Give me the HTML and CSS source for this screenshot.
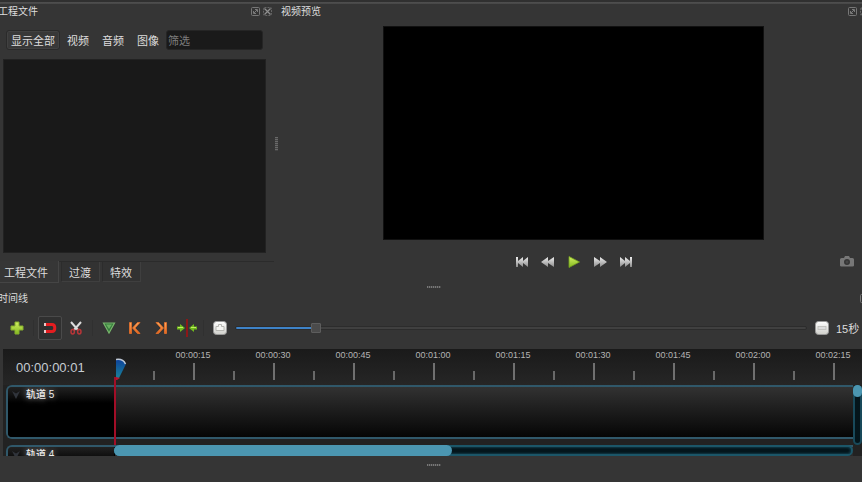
FILE: index.html
```html
<!DOCTYPE html>
<html lang="zh-CN">
<head>
<meta charset="utf-8">
<title>视频编辑</title>
<link rel="stylesheet" href="styles.css">
</head>
<body>
<svg class="defs" aria-hidden="true">
  <defs>
    <linearGradient id="silver" x1="0" y1="0" x2="0" y2="1"><stop offset="0" stop-color="#eee"/><stop offset="1" stop-color="#8d8d8d"/></linearGradient>
    <linearGradient id="green" x1="0" y1="0" x2="0" y2="1"><stop offset="0" stop-color="#d2ef62"/><stop offset="1" stop-color="#83b81f"/></linearGradient>
    <linearGradient id="orange" x1="0" y1="0" x2="0" y2="1"><stop offset="0" stop-color="#ffac60"/><stop offset="1" stop-color="#e2631c"/></linearGradient>
    <linearGradient id="blue" x1="0" y1="0" x2="0" y2="1"><stop offset="0" stop-color="#0d419b"/><stop offset="1" stop-color="#1b8a9a"/></linearGradient>
    <linearGradient id="white" x1="0" y1="0" x2="0" y2="1"><stop offset="0" stop-color="#fff"/><stop offset="1" stop-color="#cfcfca"/></linearGradient>
    <symbol id="float" viewBox="0 0 9 9"><rect x=".5" y=".5" width="8" height="8" rx="1" fill="none" stroke="#777"/><path d="M2.500 4v2.500H5M4 2.500h2.500V5M3 6l3-3" fill="none" stroke="#7a7a7a"/></symbol>
    <symbol id="close" viewBox="0 0 9 9"><rect x=".5" y=".5" width="8" height="8" rx="1" fill="none" stroke="#666" stroke-dasharray="2 1"/><path d="M1.500 1.500l6 6M7.500 1.500l-6 6" stroke="#909090" stroke-width="1.200"/></symbol>
  </defs>
</svg>
<div class="topline"></div>
<main class="upper">
  <section class="dock files">
    <header class="dock-title"><h2>工程文件</h2><span class="dock-buttons">
      <button aria-label="浮动"><svg width="9" height="9"><use href="#float"/></svg></button>
      <button aria-label="关闭"><svg width="9" height="9"><use href="#close"/></svg></button></span></header>
    <div class="filters">
      <button class="filter on">显示全部</button><button class="filter">视频</button><button class="filter">音频</button><button class="filter">图像</button>
      <input type="text" class="search" placeholder="筛选" aria-label="筛选">
    </div>
    <div class="file-list"></div>
    <nav class="tabs"><button class="tab active">工程文件</button><button class="tab">过渡</button><button class="tab">特效</button></nav>
  </section>
  <div class="grip-v"><i></i></div>
  <section class="dock preview">
    <header class="dock-title"><h2>视频预览</h2><span class="dock-buttons">
      <button aria-label="浮动"><svg width="9" height="9"><use href="#float"/></svg></button>
      <button aria-label="关闭"><svg width="9" height="9"><use href="#close"/></svg></button></span></header>
    <div class="screen">
      <div class="video"></div>
      <div class="transport">
        <div class="play-controls">
          <button aria-label="跳到开头"><svg width="14" height="10" viewBox="0 0 14 10" fill="url(#silver)"><path d="M1 0h2v4l5-4v4l5-4v10L8 6v4L3 6v4H1z"/></svg></button>
          <button aria-label="快退"><svg width="14" height="10" viewBox="0 0 14 10" fill="url(#silver)"><path d="M0 5l7-5v4l6-4v10L7 6v4z"/></svg></button>
          <button aria-label="播放"><svg width="14" height="12" viewBox="0 0 14 12"><path d="M2 .5L12.500 6 2 11.500z" fill="url(#green)" stroke="#75a31e" stroke-width=".8"/></svg></button>
          <button aria-label="快进"><svg width="14" height="10" viewBox="0 0 14 10" fill="url(#silver)"><path d="M1 0l6 4V0l7 5-7 5V6l-6 4z"/></svg></button>
          <button aria-label="跳到结尾"><svg width="14" height="10" viewBox="0 0 14 10" fill="url(#silver)"><path d="M1 0l5 4V0l5 4V0h2v10h-2V6l-5 4V6l-5 4z"/></svg></button>
        </div>
        <button class="snapshot" aria-label="截图"><svg width="14" height="11" viewBox="0 0 14 11"><path fill="#777" fill-rule="evenodd" d="M1.500 2H4l1-2h4l1 2h2.500Q14 2 14 3.500v6q0 1-1.500 1h-11Q0 10.500 0 9.500v-6Q0 2 1.500 2zM7 3a3 3 0 1 0 0 6 3 3 0 0 0 0-6z"/><circle cx="7" cy="6" r="1.500" fill="#454545"/></svg></button>
      </div>
    </div>
  </section>
</main>
<div class="grip-h"><i></i></div>
<section class="dock timeline">
  <header class="dock-title"><h2>时间线</h2><span class="dock-buttons">
    <button aria-label="浮动"><svg width="9" height="9"><use href="#float"/></svg></button></span></header>
  <div class="tools">
    <button aria-label="添加轨道"><svg width="14" height="14" viewBox="0 0 14 14"><path d="M5 1h4v4h4v4H9v4H5V9H1V5h4z" fill="url(#green)" stroke="#86b02c"/></svg></button>
    <span class="sep"></span>
    <button class="pressed" aria-label="吸附"><svg width="14" height="12" viewBox="0 0 14 12"><path d="M3 2.500h6q2.800 0 2.800 3.500T9 9.500H3" fill="none" stroke="#e51d20" stroke-width="3"/><path d="M1 2.500h2M1 9.500h2" stroke="#e8c8c8" stroke-width="3"/></svg></button>
    <button aria-label="剃刀"><svg width="14" height="14" viewBox="0 0 14 14"><path d="M2 1l7 8M12 1L5 9" stroke="#ddd" stroke-width="2"/><path d="M5 8l-1 1M9 8l1 1" stroke="#a33" stroke-width="2"/><ellipse cx="3.700" cy="10.800" rx="1.700" ry="2.200" fill="none" stroke="#b93538" stroke-width="1.500"/><ellipse cx="10.300" cy="10.800" rx="1.700" ry="2.200" fill="none" stroke="#b93538" stroke-width="1.500"/></svg></button>
    <span class="sep"></span>
    <button aria-label="添加标记"><svg width="14" height="14" viewBox="0 0 14 14"><path d="M1.500 2h11L7 12z" fill="#347a3c" stroke="#79b66c" stroke-width="1.200"/><path d="M4 3.500h6L7 8z" fill="#69b060"/></svg></button>
    <button aria-label="上一个标记"><svg width="14" height="14" viewBox="0 0 14 14"><path d="M1.500 1.500h2v11h-2zM9.500 1.500H12L7 7l5 5.500H9.500l-5-5.500z" fill="url(#orange)" stroke="#e8702a" stroke-width=".8"/></svg></button>
    <button aria-label="下一个标记"><svg width="14" height="14" viewBox="0 0 14 14"><path d="M10.500 1.500h2v11h-2zM4.500 1.500H2l5 5.500-5 5.500h2.500l5-5.500z" fill="url(#orange)" stroke="#e8702a" stroke-width=".8"/></svg></button>
    <button aria-label="居中播放头"><svg width="20" height="18" viewBox="0 0 20 18"><path d="M10 0v18" stroke="#8c1818" stroke-width="2"/><path d="M0 7.500h3V5l5 4-5 4v-2.500H0zM20 7.500h-3V5l-5 4 5 4v-2.500h3z" fill="#6fb91e"/><path d="M1 8.500h5M19 8.500h-5" stroke="#c3ef60"/></svg></button>
    <span class="sep"></span>
    <button aria-label="放大"><svg width="14" height="14" viewBox="0 0 14 14"><rect x=".5" y=".5" width="13" height="13" rx="3" fill="url(#white)" stroke="#999"/><path d="M5.500 3.500h3v2h2.500v4H3v-4h2.500z" fill="#f5f5f2" stroke="#b7b7b2"/></svg></button>
    <input type="range" class="zoom" min="0" max="1000" value="134" style="--fill:14%" aria-label="缩放">
    <button aria-label="缩小"><svg width="14" height="14" viewBox="0 0 14 14"><rect x=".5" y=".5" width="13" height="13" rx="3" fill="url(#white)" stroke="#999"/><rect x="3" y="5.500" width="8" height="3" fill="#ddd" stroke="#bdbdb8" stroke-width=".8"/></svg></button>
    <span class="scale">15秒</span>
  </div>
  <div class="canvas">
    <div class="ruler">
      <div class="timecode">00:00:00:01</div>
      <div class="marks">
        <div class="mark">00:00:15</div><div class="mark">00:00:30</div><div class="mark">00:00:45</div><div class="mark">00:01:00</div><div class="mark">00:01:15</div><div class="mark">00:01:30</div><div class="mark">00:01:45</div><div class="mark">00:02:00</div><div class="mark">00:02:15</div>
      </div>
    </div>
    <div class="tracks">
      <div class="track"><div class="track-name"><svg width="8" height="8" viewBox="0 0 8 8"><path d="M0 0l4 2.500L8 0 4 8z" fill="#30343b"/></svg><span>轨道 5</span></div></div>
      <div class="track"><div class="track-name"><svg width="8" height="8" viewBox="0 0 8 8"><path d="M0 0l4 2.500L8 0 4 8z" fill="#30343b"/></svg><span>轨道 4</span></div></div>
    </div>
    <div class="scroll-y"><i></i></div>
    <div class="scroll-x"><i></i></div>
    <div class="playhead"><svg width="11" height="22" viewBox="0 0 11 22"><path d="M0 1.500Q7 0 10 6L3 20 0 22z" fill="url(#blue)"/><path d="M0 1.500Q7 .5 9.500 6" fill="none" stroke="#bfc9d8" stroke-width="1.500"/><path d="M0 19l4 1-3 2H0z" fill="#b4142d"/></svg></div>
  </div>
</section>
<div class="grip-h bottom"><i></i></div>
</body>
</html>
```

FILE: styles.css
```css
* { box-sizing: border-box; }
body {
  margin: 0;
  min-height: 100vh;
  overflow: hidden;
  background: #353535;
  color: #dedede;
  font: 11px/16px "Liberation Sans", "Noto Sans CJK SC", sans-serif;
}
button { display: inline-flex; align-items: center; justify-content: center; margin: 0; padding: 0; border: 0; background: none; color: inherit; font: inherit; }
svg { display: block; flex: none; }
.defs { position: absolute; width: 0; height: 0; }
.topline { height: 4px; background: linear-gradient(#303030 2px, #505050 2px, #464646); }

.upper { display: grid; grid-template-columns: 274px 7px minmax(0, 1fr); }
.dock { display: flex; flex-direction: column; min-width: 0; }
.dock-title { display: flex; align-items: center; justify-content: space-between; height: 14px; }
.dock-title h2 { margin: 0; padding-top: 2px; font-size: 10px; line-height: 14px; font-weight: 400; white-space: nowrap; }
.dock-buttons { display: flex; gap: 3px; }
.files .dock-title { padding-right: 2px; }
.files h2, .timeline h2 { margin-left: -2px; }
.preview .dock-buttons, .timeline .dock-buttons { margin-right: -7px; }

.filters { display: flex; align-items: center; gap: 1px; height: 20px; margin: 12px 11px 9px 6px; }
.filter { flex: none; height: 20px; padding: 2px 6px 0; }
.filter.on { padding: 2px 4px 0; border: 1px solid #2a2a2a; border-radius: 3px; background: #383838; box-shadow: inset 0 0 0 1px #414141; }
.search { flex: 1; min-width: 0; height: 20px; padding: 2px 1px 0; border: 1px solid #252525; border-radius: 3px; background: #1a1a1a; color: #dedede; font: inherit; }
.search::placeholder { color: #7d7d7d; opacity: 1; }
.file-list { height: 194px; margin: 0 8px 8px 3px; border: 1px solid #222; background: #191919; }
.tabs { display: flex; gap: 2px; height: 22px; border-top: 1px solid #2b2b2b; }
.tab { height: 20px; padding: 2px 8px 0 7px; border: 1px solid #3f3f3f; border-top: 0; border-left-color: #2c2c2c; background: #323232; }
.tab.active { height: 22px; margin-top: -1px; padding: 2px 10px 0 4px; border: solid #454545; border-width: 0 1px 1px 0; background: #363636; }

.grip-v { display: flex; align-items: center; }
.grip-v i { width: 3px; height: 14px; margin-left: 1px; background: repeating-linear-gradient(#696969 0 1px, #444 1px 2px); }
.grip-h { display: flex; align-items: center; justify-content: center; height: 8px; padding-left: 6px; }
.grip-h i { width: 14px; height: 2px; background: repeating-linear-gradient(90deg, #777 0 1px, #4a4a4a 1px 2px); }
.grip-h.bottom { height: 18px; }

.screen { padding-left: 4px; }
.video { width: 66%; margin: 8px auto 0; aspect-ratio: 16 / 9; border: 1px solid #111; background: #000; }
.transport { display: grid; grid-template-columns: 1fr auto 1fr; align-items: center; height: 43px; }
.play-controls { grid-column: 2; display: flex; gap: 12px; }
.play-controls button { width: 14px; height: 14px; }
.snapshot { justify-self: end; margin-right: 8px; }

.tools { display: flex; align-items: center; gap: 2px; height: 24px; margin: 11px 0 9px; padding-left: 5px; }
.tools button { flex: none; width: 24px; height: 24px; }
.tools .pressed { border: 1px solid #4a4a4a; border-radius: 2px; background: #303030; }
.sep { flex: none; width: 5px; height: 16px; background: linear-gradient(90deg, transparent 2px, #303030 2px 3px, transparent 3px); }
.zoom { flex: 1; min-width: 0; height: 12px; margin: 0 1px; appearance: none; background: none; }
.zoom::-webkit-slider-runnable-track { height: 4px; border: 1px solid #2c2c2c; border-radius: 2px; background: linear-gradient(90deg, #3e83c8 var(--fill), #404040 var(--fill)); }
.zoom::-webkit-slider-thumb { appearance: none; width: 10px; height: 10px; margin-top: -4px; border: 1px solid #5d5d5d; border-radius: 1px; background: #4b4b4b; }
.scale { flex: none; width: 26px; padding-top: 2px; white-space: nowrap; }

.canvas {
  position: relative;
  display: grid;
  grid-template-columns: minmax(0, 1fr) 9px;
  grid-template-rows: 36px 60px 11px;
  margin-left: 3px;
  overflow: hidden;
  background: #222;
}
.ruler { grid-column: 1 / 3; display: flex; background: linear-gradient(#1a1a1a, #262626); overflow: hidden; }
.timecode { flex: none; width: 150px; padding: 11px 0 0 13px; color: #c6ccd2; font-size: 13px; line-height: 16px; }
.marks { display: flex; flex: none; }
.mark {
  width: 80px;
  height: 31px;
  color: #b4b4b4;
  font-size: 9px;
  line-height: 12px;
  text-align: center;
  background:
    linear-gradient(#707070, #707070) 40px 100% / 2px 17px no-repeat,
    linear-gradient(#696969, #696969) 0 100% / 2px 9px no-repeat;
}
.tracks { grid-column: 1; grid-row: 2 / 4; display: flex; flex-direction: column; gap: 6px; margin-left: 3px; overflow: hidden; }
.track { flex: none; height: 54px; border: 2px solid #30586a; border-right: 0; border-radius: 6px 0 0 6px; background: linear-gradient(#323232, #050505); overflow: hidden; }
.track-name { display: flex; align-items: flex-start; gap: 6px; width: 107px; height: 50px; padding: 0 4px; border-right: 1px solid #000; background: linear-gradient(#222, #000 16px); color: #eee; font-size: 10px; line-height: 16px; font-weight: 500; text-shadow: 0 0 6px #aaa; }
.track-name svg { margin-top: 4px; }
.scroll-y { grid-column: 2; grid-row: 2; border: 2px solid #18495a; border-radius: 5px; background: #04151b; }
.scroll-y i { display: block; height: 12px; margin: -2px; border-radius: 5px; background: #4b96b1; }
.scroll-x { grid-column: 1; grid-row: 3; position: relative; margin-left: 111px; border: 2px solid #1b5668; border-radius: 6px; background: #04151b; box-shadow: inset 0 0 2px 1px #113844; }
.scroll-x i { display: block; width: 46%; height: 11px; margin: -2px; border-radius: 6px; background: #4b96b1; }
.playhead { position: absolute; left: 111px; top: 9px; height: 87px; border: solid transparent; border-width: 0 0 0 2px; border-image: linear-gradient(transparent 20px, #a20e27 20px) 1; }
```
